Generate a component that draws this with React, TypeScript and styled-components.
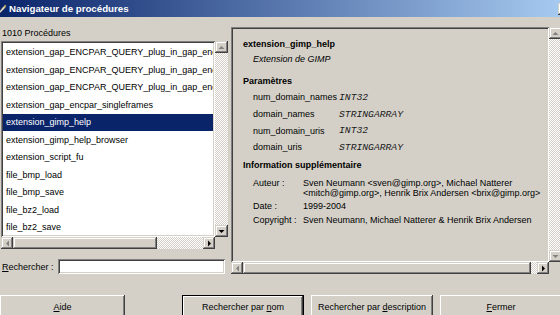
import React from 'react';
import styled, { createGlobalStyle } from 'styled-components';

const FACE = '#d4d0c8';

const raised = `box-shadow: inset -1px -1px #404040, inset 1px 1px ${FACE}, inset -2px -2px #808080, inset 2px 2px #ffffff;`;
const sunken = `box-shadow: inset 1px 1px #808080, inset -1px -1px #ffffff, inset 2px 2px #404040, inset -2px -2px ${FACE};`;
const checker = `background-color: #fff; background-image: conic-gradient(${FACE} 25%, #fff 0 50%, ${FACE} 0 75%, #fff 0); background-size: 2px 2px;`;

const GlobalStyle = createGlobalStyle`
    html, body {
        margin: 0;
        padding: 0;
        overflow: hidden;
        background: ${FACE};
    }
`;

const Window = styled.div`
    width: 562px;
    height: 315px;
    overflow: hidden;
    background: ${FACE};
    font-family: 'Liberation Sans', Arial, sans-serif;
    font-size: 9px;
    color: #000;
`;

const TitleBar = styled.div`
    height: 17px;
    display: flex;
    align-items: center;
    overflow: hidden;
    background: linear-gradient(to right, #0a246a, #a6caf0);
    color: #fff;
    font-weight: bold;
    font-size: 9.7px;
`;

const TitleIcon = styled.svg`
    width: 7px;
    height: 10px;
    margin-right: 2px;
    flex: none;
`;

const TitleButton = styled.div`
    width: 16px;
    height: 12px;
    margin-left: auto;
    margin-right: -12px;
    background: ${FACE};
    ${raised}
`;

const Body = styled.div`
    display: grid;
    grid-template-columns: 228px 331px;
    column-gap: 2px;
    padding-left: 1px;
`;

const LeftColumn = styled.div`
    display: flex;
    flex-direction: column;
    padding-top: 9px;
`;

const RightColumn = styled.div`
    padding-top: 10px;
`;

const Caption = styled.div`
    line-height: 14px;
    height: 14px;
    padding-left: 1px;
    margin-bottom: 1px;
`;

const Scrolled = styled.div<{ $cols: string; $rows: string }>`
    display: grid;
    grid-template-columns: ${(p) => p.$cols};
    grid-template-rows: ${(p) => p.$rows};
`;

const ListFrame = styled.div`
    background: #fff;
    ${sunken}
    padding: 2px;
    overflow: hidden;
`;

const Row = styled.div<{ $sel?: boolean }>`
    height: 17.56px;
    line-height: 18px;
    padding-left: 3px;
    white-space: nowrap;
    overflow: hidden;
    color: ${(p) => (p.$sel ? '#fff' : '#000')};
    background: ${(p) => (p.$sel ? 'linear-gradient(transparent 1.5px, #0a246a 1.5px)' : 'transparent')};
`;

const VTrack = styled.div`
    display: flex;
    flex-direction: column;
    justify-content: space-between;
    ${checker}
`;

const HTrack = styled.div`
    display: flex;
    ${checker}
`;

const ArrowButton = styled.div<{ $vertical?: boolean }>`
    width: ${(p) => (p.$vertical ? '13px' : '12px')};
    height: ${(p) => (p.$vertical ? '12px' : '12px')};
    display: flex;
    align-items: center;
    justify-content: center;
    flex: none;
    background: ${FACE};
    ${raised}
`;

const Thumb = styled.div<{ $w: number }>`
    width: ${(p) => p.$w}px;
    flex: none;
    background: ${FACE};
    ${raised}
`;

const Spacer = styled.div`
    flex: 1;
`;

const Corner = styled.div`
    background: ${FACE};
`;

const SearchRow = styled.div`
    display: flex;
    align-items: center;
    margin-top: 10px;
    height: 15px;
    padding-left: 1px;
`;

const SearchLabel = styled.label`
    width: 56px;
    flex: none;
`;

const SearchInput = styled.div`
    width: 167px;
    height: 15px;
    background: #fff;
    ${sunken}
`;

const Mn = styled.span`
    text-decoration: underline;
`;

const InfoFrame = styled.div`
    ${sunken}
    padding: 10px 4px 0 12px;
    overflow: hidden;
`;

const Heading = styled.div<{ $gap?: number }>`
    font-weight: bold;
    line-height: 14px;
    height: 14px;
    margin-top: ${(p) => p.$gap || 0}px;
    white-space: nowrap;
`;

const Blurb = styled.div`
    font-style: italic;
    line-height: 14px;
    margin: 1px 0 0 10px;
`;

const ParamTable = styled.div`
    display: grid;
    grid-template-columns: 86px 1fr;
    grid-auto-rows: 16.7px;
    align-items: center;
    margin: 1px 0 0 10px;
`;

const TypeName = styled.span`
    font-family: 'Liberation Mono', 'Courier New', monospace;
    font-style: italic;
    font-size: 9.7px;
    color: #202020;
`;

const InfoTable = styled.div`
    display: grid;
    grid-template-columns: 50px 1fr;
    margin: 4.6px 0 0 10px;
    line-height: 10px;
`;

const InfoCell = styled.div`
    padding: 1.7px 0;
    white-space: nowrap;
`;

const ButtonRow = styled.div`
    display: flex;
    margin-top: 21px;
    width: 562px;
`;

const ButtonGroup = styled.div`
    display: flex;
    gap: 7px;
    margin-left: auto;
`;

const Button = styled.div<{ $w: number; $default?: boolean }>`
    width: ${(p) => p.$w}px;
    height: 24px;
    display: flex;
    align-items: center;
    justify-content: center;
    background: ${FACE};
    box-shadow: ${(p) =>
        p.$default
            ? 'inset 0 0 0 1px #000, inset -2px -2px #404040, inset 2px 2px #fff, inset -3px -3px #808080'
            : `inset -1px -1px #404040, inset 1px 1px #fff, inset -2px -2px #808080`};
`;

type Dir = 'up' | 'down' | 'left' | 'right';

const POINTS: Record<Dir, string> = {
    up: '0.5,5 3.5,2 6.5,5',
    down: '0.5,2 3.5,5 6.5,2',
    left: '5,0.5 2,3.5 5,6.5',
    right: '2,0.5 5,3.5 2,6.5'
};

const Arrow = ({ dir, off }: { dir: Dir; off?: boolean }) => (
    <ArrowButton $vertical={dir === 'up' || dir === 'down'}>
        <svg width="7" height="7" viewBox="0 0 7 7">
            <polygon points={POINTS[dir]} fill={off ? '#808080' : '#000'} />
        </svg>
    </ArrowButton>
);

const PROCEDURES = [
    'extension_gap_ENCPAR_QUERY_plug_in_gap_enc_',
    'extension_gap_ENCPAR_QUERY_plug_in_gap_enc_',
    'extension_gap_encpar_singleframes',
    'extension_gimp_help',
    'extension_gimp_help_browser',
    'extension_script_fu',
    'file_bmp_load',
    'file_bmp_save',
    'file_bz2_load',
    'file_bz2_save'
];

const PARAMS = [
    ['num_domain_names', 'INT32'],
    ['domain_names', 'STRINGARRAY'],
    ['num_domain_uris', 'INT32'],
    ['domain_uris', 'STRINGARRAY']
];

const App = () => {
    return (
        <Window>
            <GlobalStyle />
            <TitleBar>
                <TitleIcon viewBox="0 0 7 10">
                    <path d="M-2 9 L4 2 L6 1 L5 4 L-1 10 Z" fill="#e8e4d8" stroke="#6b6b58" strokeWidth="0.6" />
                    <path d="M4 2 L6 1 L5 4 Z" fill="#c9b64a" />
                </TitleIcon>
                Navigateur de procédures
                <TitleButton />
            </TitleBar>
            <Body>
                <LeftColumn>
                    <Caption>1010 Procédures</Caption>
                    <Scrolled $cols="214px 13px" $rows="196px 12px">
                        <ListFrame>
                            <Row>{PROCEDURES[0]}</Row>
                            {PROCEDURES.map((name, i) => (
                                <Row key={i} $sel={name === 'extension_gimp_help'}>
                                    {name}
                                </Row>
                            ))}
                        </ListFrame>
                        <VTrack>
                            <Arrow dir="up" off />
                            <Arrow dir="down" />
                        </VTrack>
                        <HTrack>
                            <Arrow dir="left" off />
                            <Thumb $w={144} />
                            <Spacer />
                            <Arrow dir="right" />
                        </HTrack>
                        <Corner />
                    </Scrolled>
                    <SearchRow>
                        <SearchLabel>
                            <Mn>R</Mn>echercher :
                        </SearchLabel>
                        <SearchInput />
                    </SearchRow>
                </LeftColumn>
                <RightColumn>
                    <Scrolled $cols="318px 13px" $rows="235px 12px">
                        <InfoFrame>
                            <Heading>extension_gimp_help</Heading>
                            <Blurb>Extension de GIMP</Blurb>
                            <Heading $gap={8}>Paramètres</Heading>
                            <ParamTable>
                                {PARAMS.map(([name, type]) => (
                                    <React.Fragment key={name}>
                                        <span>{name}</span>
                                        <TypeName>{type}</TypeName>
                                    </React.Fragment>
                                ))}
                            </ParamTable>
                            <Heading $gap={2}>Information supplémentaire</Heading>
                            <InfoTable>
                                <InfoCell>Auteur :</InfoCell>
                                <InfoCell>
                                    Sven Neumann &lt;sven@gimp.org&gt;, Michael Natterer
                                    <br />
                                    &lt;mitch@gimp.org&gt;, Henrik Brix Andersen &lt;brix@gimp.org&gt;
                                </InfoCell>
                                <InfoCell>Date :</InfoCell>
                                <InfoCell>1999-2004</InfoCell>
                                <InfoCell>Copyright :</InfoCell>
                                <InfoCell>Sven Neumann, Michael Natterer &amp; Henrik Brix Andersen</InfoCell>
                            </InfoTable>
                        </InfoFrame>
                        <VTrack>
                            <Arrow dir="up" off />
                            <Arrow dir="down" off />
                        </VTrack>
                        <HTrack>
                            <Arrow dir="left" off />
                            <Thumb $w={288} />
                            <Spacer />
                            <Arrow dir="right" />
                        </HTrack>
                        <Corner />
                    </Scrolled>
                </RightColumn>
            </Body>
            <ButtonRow>
                <Button $w={125}>
                    <span>
                        <Mn>A</Mn>ide
                    </span>
                </Button>
                <ButtonGroup>
                    <Button $w={122} $default>
                        <span>
                            Rechercher par <Mn>n</Mn>om
                        </span>
                    </Button>
                    <Button $w={122}>
                        <span>
                            Rechercher par <Mn>d</Mn>escription
                        </span>
                    </Button>
                    <Button $w={122}>
                        <span>
                            <Mn>F</Mn>ermer
                        </span>
                    </Button>
                </ButtonGroup>
            </ButtonRow>
        </Window>
    );
};

export default App;
